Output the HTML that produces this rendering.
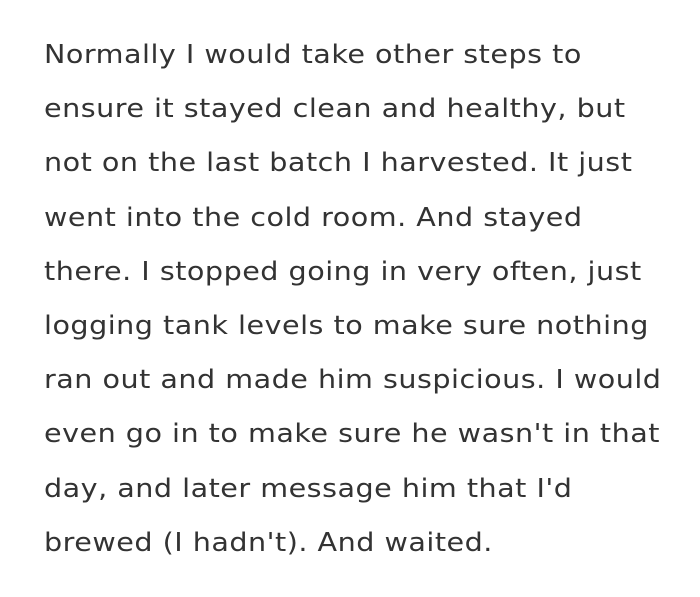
<!DOCTYPE html>
<html><head><meta charset="utf-8"><style>
html,body{margin:0;padding:0;background:#fff;width:700px;height:597px;overflow:hidden}
.t{position:absolute;left:44px;top:28px;font-family:"DejaVu Sans","Liberation Sans",sans-serif;font-size:26px;letter-spacing:0.45px;line-height:54.2px;color:#333;transform:scaleX(1.1);transform-origin:0 0}
.t div{white-space:nowrap}
</style></head><body>
<div class="t">
<div>Normally I would take other steps to</div>
<div>ensure it stayed clean and healthy, but</div>
<div>not on the last batch I harvested. It just</div>
<div>went into the cold room. And stayed</div>
<div>there. I stopped going in very often, just</div>
<div>logging tank levels to make sure nothing</div>
<div>ran out and made him suspicious. I would</div>
<div>even go in to make sure he wasn't in that</div>
<div>day, and later message him that I'd</div>
<div>brewed (I hadn't). And waited.</div>
</div>
</body></html>
